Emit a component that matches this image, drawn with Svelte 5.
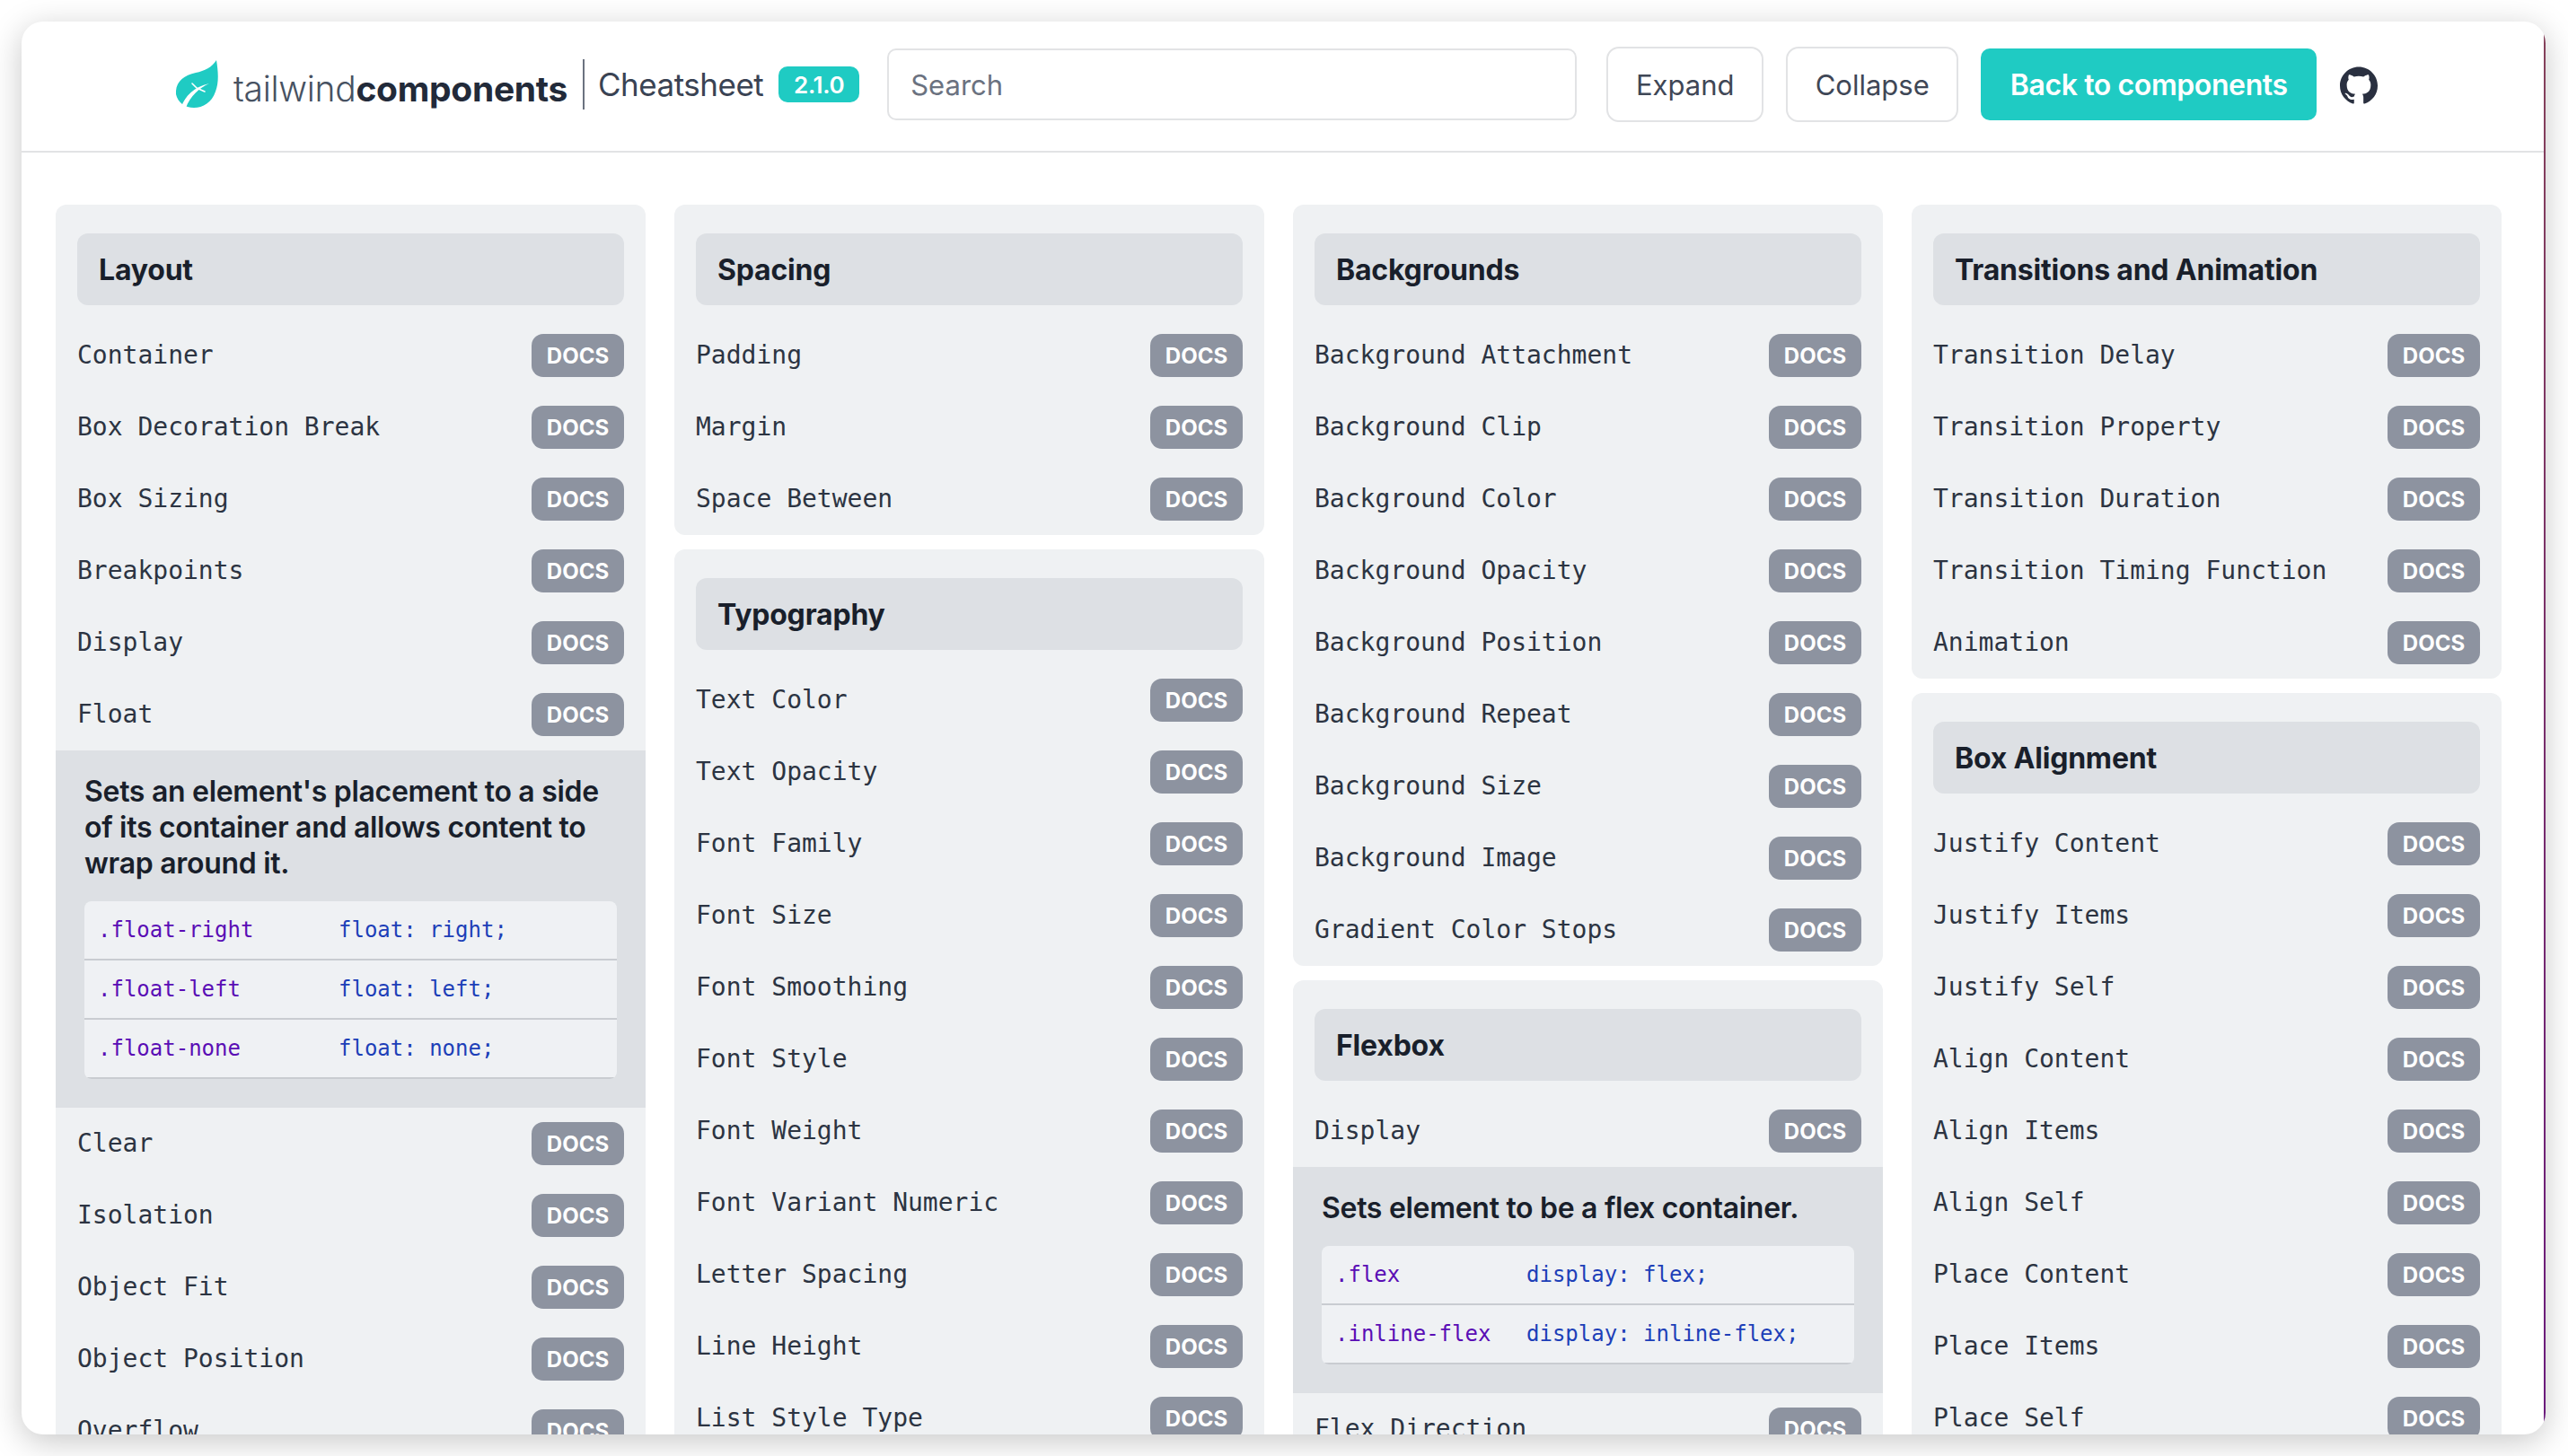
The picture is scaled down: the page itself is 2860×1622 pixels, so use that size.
<script>
	// firstCol: width of the class column in the detail tables, auto table layout in the original
	const columns = [
		[
			{
				title: 'Layout',
				rows: [
					{ name: 'Container' },
					{ name: 'Box Decoration Break' },
					{ name: 'Box Sizing' },
					{ name: 'Breakpoints' },
					{ name: 'Display' },
					{
						name: 'Float',
						detail: {
							text: "Sets an element's placement to a side of its container and allows content to wrap around it.",
							firstCol: 267,
							classes: [
								['.float-right', 'float: right;'],
								['.float-left', 'float: left;'],
								['.float-none', 'float: none;']
							]
						}
					},
					{ name: 'Clear' },
					{ name: 'Isolation' },
					{ name: 'Object Fit' },
					{ name: 'Object Position' },
					{ name: 'Overflow' }
				]
			}
		],
		[
			{
				title: 'Spacing',
				rows: [{ name: 'Padding' }, { name: 'Margin' }, { name: 'Space Between' }]
			},
			{
				title: 'Typography',
				rows: [
					{ name: 'Text Color' },
					{ name: 'Text Opacity' },
					{ name: 'Font Family' },
					{ name: 'Font Size' },
					{ name: 'Font Smoothing' },
					{ name: 'Font Style' },
					{ name: 'Font Weight' },
					{ name: 'Font Variant Numeric' },
					{ name: 'Letter Spacing' },
					{ name: 'Line Height' },
					{ name: 'List Style Type' }
				]
			}
		],
		[
			{
				title: 'Backgrounds',
				rows: [
					{ name: 'Background Attachment' },
					{ name: 'Background Clip' },
					{ name: 'Background Color' },
					{ name: 'Background Opacity' },
					{ name: 'Background Position' },
					{ name: 'Background Repeat' },
					{ name: 'Background Size' },
					{ name: 'Background Image' },
					{ name: 'Gradient Color Stops' }
				]
			},
			{
				title: 'Flexbox',
				rows: [
					{
						name: 'Display',
						detail: {
							text: 'Sets element to be a flex container.',
							firstCol: 212,
							classes: [
								['.flex', 'display: flex;'],
								['.inline-flex', 'display: inline-flex;']
							]
						}
					},
					{ name: 'Flex Direction' }
				]
			}
		],
		[
			{
				title: 'Transitions and Animation',
				rows: [
					{ name: 'Transition Delay' },
					{ name: 'Transition Property' },
					{ name: 'Transition Duration' },
					{ name: 'Transition Timing Function' },
					{ name: 'Animation' }
				]
			},
			{
				title: 'Box Alignment',
				rows: [
					{ name: 'Justify Content' },
					{ name: 'Justify Items' },
					{ name: 'Justify Self' },
					{ name: 'Align Content' },
					{ name: 'Align Items' },
					{ name: 'Align Self' },
					{ name: 'Place Content' },
					{ name: 'Place Items' },
					{ name: 'Place Self' }
				]
			}
		]
	]
</script>

<div class="page">
	<div class="window">
		<header>
			<a class="logo" href="#top">
				<svg class="leaf" viewBox="0 0 49 54" width="49" height="54">
					<path fill="#1fcbc3" d="M45 0C47 12 48 25 44 35C40 47 30 53 20 53C10 53 2 47 0 38C-1 25 8 17 22 14C32 12 40 8 45 0Z" />
					<path fill="#fff" d="M6 52C10 40 20 30 37 26C26 31 16 40 11 53Z" />
					<path fill="none" stroke="#fff" stroke-width="1.6" stroke-linecap="round" d="M18 26L24 32M23 31L32 35" />
				</svg>
				<span class="wordmark">tailwind<b>components</b></span>
			</a>
			<span class="divider"></span>
			<span class="sheet">Cheatsheet</span>
			<span class="version">2.1.0</span>
			<input class="search" type="text" placeholder="Search" />
			<button class="outline expand">Expand</button>
			<button class="outline collapse">Collapse</button>
			<a class="back" href="#top">Back to components</a>
			<svg class="github" viewBox="0 0 24 24" width="42" height="42">
				<path fill="#2a3040" d="M12 .297c-6.63 0-12 5.373-12 12 0 5.303 3.438 9.8 8.205 11.385.6.113.82-.258.82-.577 0-.285-.01-1.04-.015-2.04-3.338.724-4.042-1.61-4.042-1.61C4.422 18.07 3.633 17.7 3.633 17.7c-1.087-.744.084-.729.084-.729 1.205.084 1.838 1.236 1.838 1.236 1.07 1.835 2.809 1.305 3.495.998.108-.776.417-1.305.76-1.605-2.665-.3-5.466-1.332-5.466-5.93 0-1.31.465-2.38 1.235-3.22-.135-.303-.54-1.523.105-3.176 0 0 1.005-.322 3.3 1.23.96-.267 1.98-.399 3-.405 1.02.006 2.04.138 3 .405 2.28-1.552 3.285-1.23 3.285-1.23.645 1.653.24 2.873.12 3.176.765.84 1.23 1.91 1.23 3.22 0 4.61-2.805 5.625-5.475 5.92.42.36.81 1.096.81 2.22 0 1.606-.015 2.896-.015 3.286 0 .315.21.69.825.57C20.565 22.092 24 17.592 24 12.297c0-6.627-5.373-12-12-12" />
			</svg>
		</header>

		<main>
			{#each columns as sections}
				<div class="column">
					{#each sections as section}
						<section>
							<h2>{section.title}</h2>
							{#each section.rows as row}
								<div class="row">
									<span class="name">{row.name}</span>
									<a class="docs" href="#top">DOCS</a>
								</div>
								{#if row.detail}
									<div class="detail">
										<p>{row.detail.text}</p>
										<div class="classes">
											{#each row.detail.classes as [cls, value]}
												<div class="class-row">
													<code class="cls" style="width: {row.detail.firstCol}px">{cls}</code>
													<code class="val">{value}</code>
												</div>
											{/each}
										</div>
									</div>
								{/if}
							{/each}
						</section>
					{/each}
				</div>
			{/each}
		</main>
	</div>
</div>

<style>
	:global(body) {
		margin: 0;
		background: #fff;
	}
	:global(*) {
		box-sizing: border-box;
	}
	.page {
		width: 2860px;
		height: 1622px;
		padding: 24px 25px 24px 24px;
		overflow: hidden;
		font-family: Inter, "Noto Sans", sans-serif;
	}
	.window {
		position: relative;
		height: 1574px;
		background: #fff;
		border-radius: 24px;
		overflow: hidden;
		box-shadow: 0 8px 36px rgba(0, 0, 0, 0.22);
	}
	.window::after {
		content: '';
		position: absolute;
		top: 0;
		right: 0;
		bottom: 0;
		width: 2px;
		background: linear-gradient(#85415a, #6a1a7c);
	}
	header {
		display: flex;
		align-items: center;
		height: 146px;
		padding: 0 0 4px 172px;
		border-bottom: 2px solid #e2e3e5;
	}
	.logo {
		display: flex;
		align-items: center;
		gap: 15px;
		text-decoration: none;
	}
	.wordmark {
		font-size: 39px;
		color: #475262;
		font-weight: 300;
		letter-spacing: -0.3px;
		margin-top: 8px;
	}
	.wordmark b {
		font-weight: 700;
		color: #222a39;
	}
	.divider {
		width: 2px;
		height: 56px;
		background: #6b7280;
		margin: 0 15px 0 17px;
	}
	.sheet {
		font-size: 35px;
		color: #3a4353;
		letter-spacing: -0.5px;
	}
	.version {
		display: flex;
		align-items: center;
		justify-content: center;
		width: 90px;
		height: 40px;
		margin-left: 17px;
		border-radius: 10px;
		background: #1fcbc3;
		color: #fff;
		font-size: 26px;
		font-weight: 600;
		letter-spacing: -0.3px;
	}
	.search {
		width: 768px;
		height: 80px;
		margin-left: 31px;
		padding: 0 24px;
		border: 2px solid #e2e3e5;
		border-radius: 10px;
		font: 31px Inter, sans-serif;
		color: #374151;
		outline: none;
	}
	.search::placeholder {
		color: #6b7280;
		opacity: 1;
	}
	.outline {
		height: 84px;
		border: 2px solid #e2e3e5;
		border-radius: 14px;
		background: #fff;
		color: #3f4756;
		font: 31px Inter, sans-serif;
		padding: 0;
	}
	.expand {
		width: 175px;
		margin-left: 33px;
	}
	.collapse {
		width: 192px;
		margin-left: 25px;
	}
	.back {
		display: flex;
		align-items: center;
		justify-content: center;
		width: 374px;
		height: 80px;
		margin-left: 25px;
		border-radius: 10px;
		background: #1fcbc3;
		color: #fff;
		font-size: 32px;
		font-weight: 600;
		letter-spacing: -0.4px;
		text-decoration: none;
	}
	.github {
		margin-left: 26px;
		margin-top: 2px;
	}
	main {
		display: grid;
		grid-template-columns: repeat(4, 657px);
		gap: 32px;
		padding: 58px 0 0 38px;
	}
	.column {
		display: flex;
		flex-direction: column;
		gap: 16px;
	}
	section {
		background: #eff1f3;
		border-radius: 12px;
		padding-top: 32px;
	}
	h2 {
		margin: 0 24px 16px;
		height: 80px;
		padding: 0 24px;
		display: flex;
		align-items: center;
		background: #dde0e4;
		border-radius: 12px;
		color: #191f2b;
		font-size: 32px;
		font-weight: 700;
		letter-spacing: -0.2px;
	}
	.row {
		display: flex;
		align-items: center;
		justify-content: space-between;
		height: 80px;
		padding: 0 24px;
	}
	.name {
		font-family: "DejaVu Sans Mono", monospace;
		font-size: 28px;
		color: #2c3442;
		margin-bottom: 2px;
	}
	.docs {
		display: flex;
		align-items: center;
		justify-content: center;
		width: 103px;
		height: 48px;
		border-radius: 13px;
		background: #8d93a0;
		color: #fff;
		font-size: 24px;
		font-weight: 700;
		text-decoration: none;
	}
	.detail {
		background: #dde0e4;
		padding: 26px 32px 32px;
	}
	.detail p {
		margin: 0 0 22px;
		font-size: 32px;
		line-height: 40px;
		font-weight: 600;
		letter-spacing: -0.3px;
		color: #191f2b;
	}
	.classes {
		background: #eff1f4;
		border-radius: 8px;
		overflow: hidden;
	}
	.class-row {
		display: flex;
		align-items: center;
		height: 66px;
		border-bottom: 2px solid #c9ccd1;
	}
	code {
		font-family: "DejaVu Sans Mono", monospace;
		font-size: 24px;
	}
	.cls {
		padding-left: 15px;
		color: #5a0db5;
	}
	.val {
		padding-left: 16px;
		color: #1d3fb8;
	}
</style>
